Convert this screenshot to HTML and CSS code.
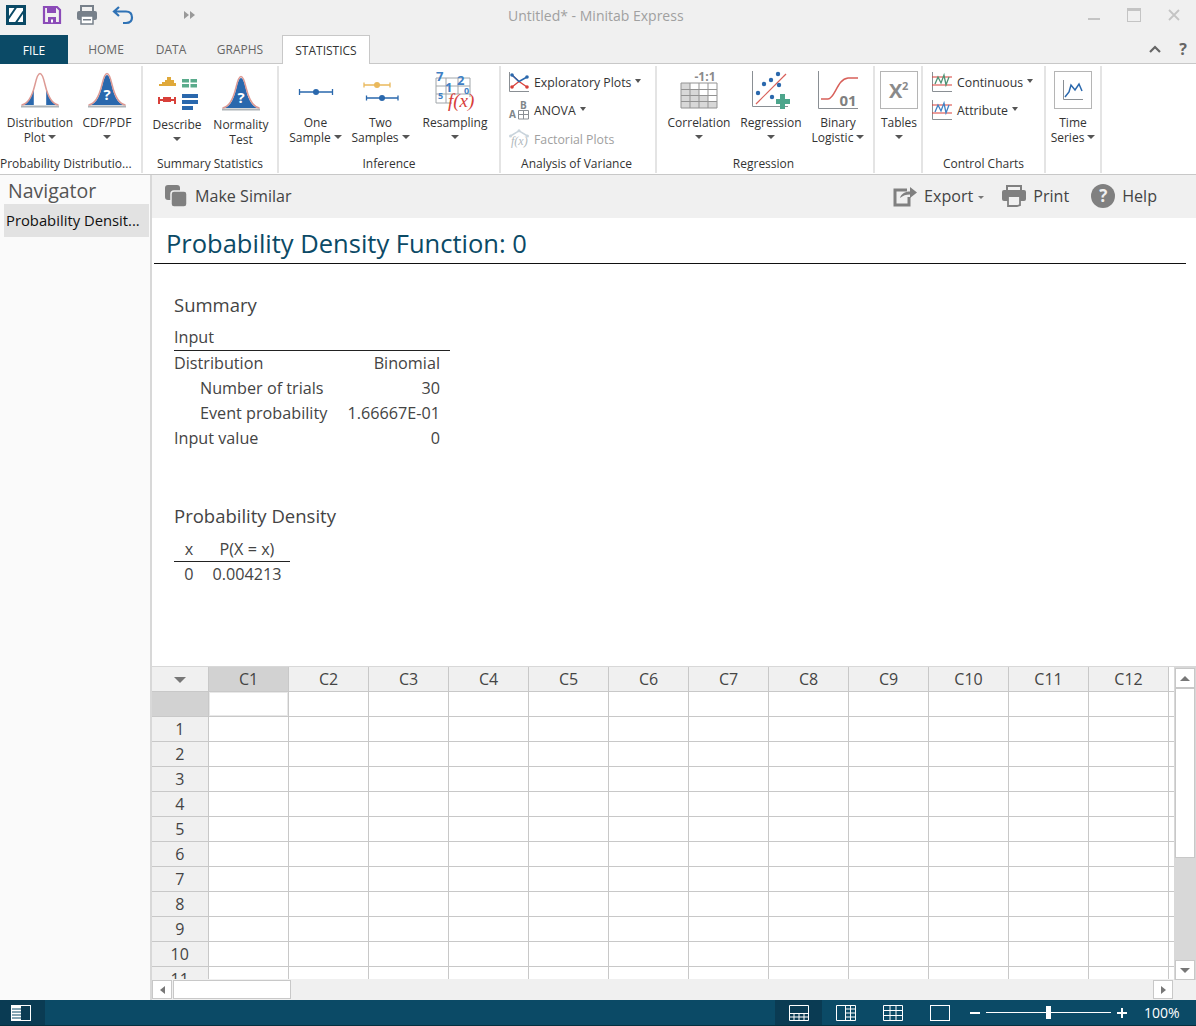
FILE: index.html
```html
<!DOCTYPE html>
<html lang="en">
<head>
<meta charset="utf-8">
<title>Untitled* - Minitab Express</title>
<link rel="stylesheet" href="styles.css">
</head>
<body>
<div class="app">
  <svg width="0" height="0" class="defs">
    <defs>
      <symbol id="bell-line" viewBox="0 0 40 36">
        <rect x="1" y="33.5" width="38" height="2" fill="#aeb4b8"/>
        <path d="M1.5 33C9 32 12.5 23 15 12.5C16.5 6 18 1.5 20 1.5C22 1.5 23.500 6 25 12.500C27.500 23 31 32 38.500 33" fill="none" stroke="#dd9a94" stroke-width="1.500"/>
      </symbol>
    </defs>
  </svg>

  <header class="titlebar">
    <div class="qat">
      <svg class="qat-logo" width="20" height="20" viewBox="0 0 20 20"><rect width="20" height="20" fill="#0b4a66"/><rect x="3" y="3" width="14" height="14" fill="#fff"/><path d="M2.500 13.500L10 2.500M10 17.500L17.500 6.500" stroke="#0b4a66" stroke-width="2"/></svg>
      <svg width="20" height="20" viewBox="0 0 20 20"><path d="M2 2H15L18 5V18H2Z" fill="none" stroke="#8b4bb8" stroke-width="2.200"/><rect x="5" y="2" width="9" height="6" fill="#8b4bb8"/><rect x="6" y="12" width="8" height="6" fill="#8b4bb8"/><rect x="9" y="14.500" width="2" height="3" fill="#fff"/></svg>
      <svg width="22" height="20" viewBox="0 0 22 20"><rect x="5" y="1" width="12" height="6" fill="none" stroke="#77808a" stroke-width="2"/><rect x="1" y="6" width="20" height="9" rx="2" fill="#77808a"/><rect x="5" y="11" width="12" height="8" fill="#fff" stroke="#77808a" stroke-width="1.500"/><rect x="7" y="14" width="8" height="1.500" fill="#77808a"/></svg>
      <svg width="22" height="20" viewBox="0 0 22 20"><path d="M7 2L2 6.500L7 11M2.500 6.500H14C18 6.500 20 9 20 12.500C20 16 18 18 14 18H11" fill="none" stroke="#2f72b5" stroke-width="2.200"/></svg>
      <span class="qat-more"><i></i><i></i></span>
    </div>
    <div class="window-title">Untitled* - Minitab Express</div>
    <div class="window-controls">
      <svg width="12" height="12" viewBox="0 0 12 12"><rect y="9" width="12" height="2" fill="#c4c4c4"/></svg>
      <svg width="14" height="14" viewBox="0 0 14 14"><rect x="0.500" y="0.500" width="13" height="13" fill="none" stroke="#c4c4c4"/><rect width="14" height="3" fill="#c4c4c4"/></svg>
      <svg width="12" height="12" viewBox="0 0 12 12"><path d="M1 1L11 11M11 1L1 11" stroke="#c4c4c4" stroke-width="1.800"/></svg>
    </div>
  </header>

  <nav class="tabs">
    <span class="tab file">FILE</span>
    <span class="tab t-home">HOME</span>
    <span class="tab t-data">DATA</span>
    <span class="tab t-graphs">GRAPHS</span>
    <span class="tab active">STATISTICS</span>
    <span class="tab-tools">
      <svg width="12" height="8" viewBox="0 0 12 8"><path d="M1 7L6 2L11 7" fill="none" stroke="#666" stroke-width="2.200"/></svg>
      <b class="help-q">?</b>
    </span>
  </nav>

  <section class="ribbon">
    <div class="group g1">
      <div class="group-body">
        <button class="rb w72">
          <span class="rb-icon"><svg width="40" height="36" viewBox="0 0 40 36"><path d="M3 33C8 31.500 11.500 26 13.800 16V33ZM37 33C32 31.500 28.500 26 26.200 16V33Z" fill="#2a68ad"/><use href="#bell-line"/></svg></span>
          <span>Distribution</span><span>Plot<i class="caret"></i></span>
        </button>
        <button class="rb w62">
          <span class="rb-icon"><svg width="40" height="36" viewBox="0 0 40 36"><path d="M3 33C10 31 13 23 15.500 12.500C17 6 18.500 3 20 3C21.500 3 23 6 24.500 12.500C27 23 30 31 37 33Z" fill="#2a68ad"/><use href="#bell-line"/><text x="20" y="28" class="q-mark">?</text></svg></span>
          <span>CDF/PDF</span><span><i class="caret solo"></i></span>
        </button>
      </div>
      <div class="group-label">Probability Distributio...</div>
    </div>

    <div class="group g2">
      <div class="group-body">
        <button class="rb w64 low">
          <span class="rb-icon">
            <svg width="42" height="36" viewBox="0 0 42 36">
              <path d="M3 11V9H6V7H9V5H11V2H15V5H18V8H20V11Z" fill="#e0a93a"/>
              <path d="M26 4H33V7.500H26ZM34.500 4H41V7.500H34.500ZM26 9H33V12.500H26ZM34.500 9H41V12.500H34.500Z" fill="#5aab8c"/>
              <path d="M3 25H19M3 22V29M19 22V29" stroke="#d8403a" stroke-width="2" fill="none"/><rect x="7" y="22" width="8" height="5" fill="#d8403a"/>
              <path d="M26 19H42V23H26ZM26 25H42V29H26ZM26 31H37V35H26Z" fill="#2a68ad"/>
            </svg>
          </span>
          <span>Describe</span><span><i class="caret solo"></i></span>
        </button>
        <button class="rb w64 low">
          <span class="rb-icon"><svg width="40" height="36" viewBox="0 0 40 36"><path d="M3 33C10 31 13 23 15.500 12.500C17 6 18.500 3 20 3C21.500 3 23 6 24.500 12.500C27 23 30 31 37 33Z" fill="#2a68ad"/><use href="#bell-line"/><text x="20" y="28" class="q-mark">?</text></svg></span>
          <span>Normality</span><span>Test</span>
        </button>
      </div>
      <div class="group-label">Summary Statistics</div>
    </div>

    <div class="group g3">
      <div class="group-body">
        <button class="rb w65">
          <span class="rb-icon"><svg width="36" height="36" viewBox="0 0 36 36"><path d="M1.500 20H34.500M1.500 17V23M34.500 17V23" stroke="#2a68ad" stroke-width="1.300" fill="none"/><circle cx="18" cy="20" r="3" fill="#2a68ad"/></svg></span>
          <span>One</span><span>Sample<i class="caret"></i></span>
        </button>
        <button class="rb w65">
          <span class="rb-icon"><svg width="36" height="36" viewBox="0 0 36 36"><path d="M1 13H27M1 10.500V15.500M27 10.500V15.500" stroke="#eab95c" stroke-width="1.300" fill="none"/><circle cx="14" cy="13" r="3" fill="#eab95c"/><path d="M3.500 26H35M3.500 23.500V28.500M35 23.500V28.500" stroke="#2a68ad" stroke-width="1.300" fill="none"/><circle cx="19" cy="26" r="3" fill="#2a68ad"/></svg></span>
          <span>Two</span><span>Samples<i class="caret"></i></span>
        </button>
        <button class="rb w84">
          <span class="rb-icon">
            <svg class="res-icon" width="40" height="40" viewBox="0 0 40 40">
              <path d="M1 8H35V27M1 8V33H17M1 16H35M1 24H35M11 8V33M23 8V24" fill="none" stroke="#a0a6aa" stroke-width="1"/>
              <text x="1" y="11" class="rs-n">7</text><text x="10" y="22" class="rs-n">1</text><text x="22" y="15" class="rs-n">2</text><text x="29" y="24" class="rs-s">0</text><text x="3" y="29" class="rs-s">5</text>
              <text x="13" y="37" class="rs-f">f(x)</text>
            </svg>
          </span>
          <span>Resampling</span><span><i class="caret solo"></i></span>
        </button>
      </div>
      <div class="group-label">Inference</div>
    </div>

    <div class="group g4">
      <div class="stack">
        <div class="sm-row h1st">
          <svg width="20" height="20" viewBox="0 0 20 20"><path d="M0.500 0V19.500H20" fill="none" stroke="#8a8f94"/><path d="M3 3L10 9.500L3 15M10 9.500L18 15" fill="none" stroke="#d8403a" stroke-width="1.300"/><path d="M3 3L10 9.500L18 5" fill="none" stroke="#2a68ad" stroke-width="1.500"/><circle cx="3" cy="15" r="1.800" fill="#d8403a"/><circle cx="18" cy="15" r="1.800" fill="#d8403a"/><circle cx="3" cy="3" r="1.800" fill="#2a68ad"/><circle cx="18" cy="5" r="1.800" fill="#2a68ad"/></svg>
          <span>Exploratory Plots<i class="caret"></i></span>
        </div>
        <div class="sm-row">
          <svg width="20" height="20" viewBox="0 0 20 20"><text x="0" y="18" class="an-t">A</text><text x="11" y="9" class="an-t">B</text><path d="M9.500 10.500H19.500V19H9.500ZM14.500 10.500V19M9.500 14.500H19.500" fill="none" stroke="#8a8f94"/></svg>
          <span>ANOVA<i class="caret"></i></span>
        </div>
        <div class="sm-row off">
          <svg width="20" height="20" viewBox="0 0 20 20"><path d="M1.500 7L10 1.800L18.500 7" fill="none" stroke="#c9d4dc" stroke-width="1.500"/><circle cx="1.500" cy="7" r="1.500" fill="#c9d4dc"/><circle cx="10" cy="1.800" r="1.500" fill="#c9d4dc"/><circle cx="18.500" cy="7" r="1.500" fill="#c9d4dc"/><text x="2" y="16" class="fx-t">f(x)</text></svg>
          <span>Factorial Plots</span>
        </div>
      </div>
      <div class="group-label">Analysis of Variance</div>
    </div>

    <div class="group g5">
      <div class="group-body">
        <button class="rb w84">
          <span class="rb-icon">
            <svg width="38" height="38" viewBox="0 0 38 38"><text x="25" y="10" class="corr-t">-1:1</text><rect x="1" y="12" width="36" height="25" fill="#fff"/><path d="M1 12H10V18H1ZM1 18H19V24H1ZM1 24H28V31H1ZM1 31H37V37H1Z" fill="#d8d8d8"/><path d="M1 12H37V37H1ZM1 18.500H37M1 24.500H37M1 30.500H37M10 12V37M19 12V37M28 12V37" fill="none" stroke="#939393" stroke-width="1"/></svg>
          </span>
          <span>Correlation</span><span><i class="caret solo"></i></span>
        </button>
        <button class="rb w60">
          <span class="rb-icon">
            <svg width="38" height="38" viewBox="0 0 38 38"><path d="M0.500 0V35.500H36" fill="none" stroke="#8a8f94"/><path d="M4 33L34 3" stroke="#d8605a" stroke-width="1.200"/><g fill="#2a68ad"><circle cx="6" cy="22" r="2.200"/><circle cx="12" cy="13" r="2.200"/><circle cx="19" cy="9" r="2.200"/><circle cx="26" cy="3" r="2.200"/><circle cx="27" cy="14" r="2.200"/><circle cx="20" cy="26" r="2.200"/></g><path d="M28 23H33V28H38V33H33V38H28V33H24V28H28Z" fill="#4da58c"/></svg>
          </span>
          <span>Regression</span><span><i class="caret solo"></i></span>
        </button>
        <button class="rb w74">
          <span class="rb-icon">
            <svg width="40" height="38" viewBox="0 0 40 38"><path d="M0.500 0V37.500H40" fill="none" stroke="#8a8f94"/><path d="M3 28H10C17 28 19 8 30 7H40" fill="none" stroke="#d8605a" stroke-width="1.500"/><text x="30" y="35" class="bin-t">01</text></svg>
          </span>
          <span>Binary</span><span>Logistic<i class="caret"></i></span>
        </button>
      </div>
      <div class="group-label">Regression</div>
    </div>

    <div class="group g6">
      <div class="group-body">
        <button class="rb w46">
          <span class="rb-icon"><span class="boxed"><svg width="36" height="36" viewBox="0 0 36 36"><text x="8" y="26" class="x2">X</text><text x="21" y="18" class="x2s">2</text></svg></span></span>
          <span>Tables</span><span><i class="caret solo"></i></span>
        </button>
      </div>
      <div class="group-label">&nbsp;</div>
    </div>

    <div class="group g7">
      <div class="stack">
        <div class="sm-row h1st">
          <svg width="20" height="20" viewBox="0 0 20 20"><path d="M0.500 0V19.500H20" fill="none" stroke="#8a8f94"/><path d="M0 5H20M0 13H20" stroke="#d8403a" stroke-width="1.200"/><path d="M3 12L6 5L9 11L12 3L14 13L17 5" fill="none" stroke="#4d9273" stroke-width="1.300"/></svg>
          <span>Continuous<i class="caret"></i></span>
        </div>
        <div class="sm-row">
          <svg width="20" height="20" viewBox="0 0 20 20"><path d="M0.500 0V19.500H20" fill="none" stroke="#8a8f94"/><path d="M0 5H20M0 13H20" stroke="#d8403a" stroke-width="1.200"/><path d="M3 12L6 5L9 11L12 3L14 13L17 5" fill="none" stroke="#3f80c4" stroke-width="1.300"/></svg>
          <span>Attribute<i class="caret"></i></span>
        </div>
      </div>
      <div class="group-label">Control Charts</div>
    </div>

    <div class="group g8">
      <div class="group-body">
        <button class="rb w54">
          <span class="rb-icon"><span class="boxed"><svg width="36" height="36" viewBox="0 0 36 36"><path d="M8.500 8V27.500H28" fill="none" stroke="#8a8f94"/><path d="M10 25L14 20L16 13L20 18L24 12L27 19" fill="none" stroke="#2a68ad" stroke-width="1.500"/></svg></span></span>
          <span>Time</span><span>Series<i class="caret"></i></span>
        </button>
      </div>
      <div class="group-label">&nbsp;</div>
    </div>
  </section>

  <div class="workspace">
    <aside class="navigator">
      <h2>Navigator</h2>
      <div class="nav-item">Probability Densit...</div>
    </aside>

    <main class="content">
      <div class="toolbar">
        <div class="tool similar">
          <svg width="24" height="24" viewBox="0 0 24 24"><rect x="1" y="1" width="15" height="15" rx="3" fill="#808080"/><rect x="7" y="7" width="16" height="16" rx="3" fill="#808080" stroke="#f0f0f0" stroke-width="1.500"/></svg>
          <span>Make Similar</span>
        </div>
        <div class="tool-right">
          <div class="tool">
            <svg width="24" height="22" viewBox="0 0 24 22"><path d="M14 5H2V20H16V12" fill="none" stroke="#808080" stroke-width="3"/><path d="M7 13C8 9 12 6.500 17 6.500V2L24 7.500L17 13V9.500C13 9.500 10 10.500 7 13Z" fill="#808080"/></svg>
            <span>Export<i class="caret dim"></i></span>
          </div>
          <div class="tool">
            <svg width="24" height="22" viewBox="0 0 24 22"><path d="M5 5V1H19V5" fill="none" stroke="#808080" stroke-width="2"/><rect y="5" width="24" height="11" rx="2" fill="#808080"/><path d="M6 11H18V20L15 21H6Z" fill="#f0f0f0" stroke="#808080" stroke-width="1.800"/></svg>
            <span>Print</span>
          </div>
          <div class="tool t-help">
            <span class="help-dot">?</span>
            <span>Help</span>
          </div>
        </div>
      </div>

      <article class="report">
        <h1>Probability Density Function: 0</h1>
        <h3 class="rep-h first">Summary</h3>
        <table class="rep-table summary">
          <thead><tr><th colspan="2">Input</th></tr></thead>
          <tbody>
            <tr><td>Distribution</td><td class="num">Binomial</td></tr>
            <tr><td class="ind">Number of trials</td><td class="num">30</td></tr>
            <tr><td class="ind">Event probability</td><td class="num">1.66667E-01</td></tr>
            <tr><td>Input value</td><td class="num">0</td></tr>
          </tbody>
        </table>
        <h3 class="rep-h second">Probability Density</h3>
        <table class="rep-table density">
          <thead><tr><th class="c-x">x</th><th class="c-p">P(X = x)</th></tr></thead>
          <tbody><tr><td class="c-x">0</td><td class="c-p">0.004213</td></tr></tbody>
        </table>
      </article>

      <div class="sheet">
        <div class="sheet-main">
          <div class="grid-clip">
            <table class="grid">
              <thead>
                <tr><th class="corner"><i class="caret big"></i></th><th class="sel">C1</th><th>C2</th><th>C3</th><th>C4</th><th>C5</th><th>C6</th><th>C7</th><th>C8</th><th>C9</th><th>C10</th><th>C11</th><th>C12</th></tr>
              </thead>
              <tbody>
                <tr><th class="sel"></th><td class="cur"></td><td></td><td></td><td></td><td></td><td></td><td></td><td></td><td></td><td></td><td></td><td></td></tr>
                <tr><th>1</th><td></td><td></td><td></td><td></td><td></td><td></td><td></td><td></td><td></td><td></td><td></td><td></td></tr>
                <tr><th>2</th><td></td><td></td><td></td><td></td><td></td><td></td><td></td><td></td><td></td><td></td><td></td><td></td></tr>
                <tr><th>3</th><td></td><td></td><td></td><td></td><td></td><td></td><td></td><td></td><td></td><td></td><td></td><td></td></tr>
                <tr><th>4</th><td></td><td></td><td></td><td></td><td></td><td></td><td></td><td></td><td></td><td></td><td></td><td></td></tr>
                <tr><th>5</th><td></td><td></td><td></td><td></td><td></td><td></td><td></td><td></td><td></td><td></td><td></td><td></td></tr>
                <tr><th>6</th><td></td><td></td><td></td><td></td><td></td><td></td><td></td><td></td><td></td><td></td><td></td><td></td></tr>
                <tr><th>7</th><td></td><td></td><td></td><td></td><td></td><td></td><td></td><td></td><td></td><td></td><td></td><td></td></tr>
                <tr><th>8</th><td></td><td></td><td></td><td></td><td></td><td></td><td></td><td></td><td></td><td></td><td></td><td></td></tr>
                <tr><th>9</th><td></td><td></td><td></td><td></td><td></td><td></td><td></td><td></td><td></td><td></td><td></td><td></td></tr>
                <tr><th>10</th><td></td><td></td><td></td><td></td><td></td><td></td><td></td><td></td><td></td><td></td><td></td><td></td></tr>
                <tr><th>11</th><td></td><td></td><td></td><td></td><td></td><td></td><td></td><td></td><td></td><td></td><td></td><td></td></tr>
              </tbody>
            </table>
          </div>
          <div class="hscroll">
            <span class="sb-btn"><i class="tri left"></i></span>
            <span class="h-thumb"></span>
            <span class="h-track"></span>
            <span class="sb-btn"><i class="tri right"></i></span>
          </div>
        </div>
        <div class="vscroll">
          <span class="sb-btn v"><i class="tri up"></i></span>
          <span class="v-thumb"></span>
          <span class="v-track"></span>
          <span class="sb-btn v"><i class="tri down"></i></span>
          <span class="v-foot"></span>
        </div>
      </div>
    </main>
  </div>

  <footer class="status">
    <span class="st-btn dark left">
      <svg width="20" height="16" viewBox="0 0 20 16"><rect x="0.500" y="0.500" width="19" height="15" fill="none" stroke="#fff"/><rect x="1" y="1" width="9" height="14" fill="#fff"/><path d="M1 4H10M1 7H10M1 10H10M1 13H10" stroke="#0b4a66"/></svg>
    </span>
    <span class="st-views">
      <span class="st-btn dark">
        <svg width="20" height="16" viewBox="0 0 20 16"><path d="M0.500 0.500H19.500V15.500H0.500ZM0.500 8.500H19.500M0.500 12H19.500M5 8.500V15.500M10 8.500V15.500M15 8.500V15.500" fill="none" stroke="#fff"/></svg>
      </span>
      <span class="st-btn">
        <svg width="20" height="16" viewBox="0 0 20 16"><path d="M0.500 0.500H19.500V15.500H0.500ZM9.500 0.500V15.500M14.500 0.500V15.500M9.500 4H19.500M9.500 8H19.500M9.500 12H19.500" fill="none" stroke="#fff"/></svg>
      </span>
      <span class="st-btn">
        <svg width="20" height="16" viewBox="0 0 20 16"><path d="M0.500 0.500H19.500V15.500H0.500ZM0.500 5.500H19.500M0.500 10.500H19.500M7 0.500V15.500M13 0.500V15.500" fill="none" stroke="#fff"/></svg>
      </span>
      <span class="st-btn">
        <svg width="20" height="16" viewBox="0 0 20 16"><rect x="0.500" y="0.500" width="19" height="15" fill="none" stroke="#fff"/></svg>
      </span>
    </span>
    <span class="zoom">
      <i class="z-minus"></i>
      <span class="z-track"><i class="z-thumb"></i></span>
      <i class="z-plus"></i>
      <span class="z-val">100%</span>
    </span>
  </footer>
</div>
</body>
</html>
```

FILE: styles.css
```css
* { box-sizing: border-box; }
html, body { margin: 0; padding: 0; }
body { font-family: "Open Sans", "Noto Sans", sans-serif; color: #333; background: #fff; }
.defs { position: absolute; }
.app { width: 1196px; height: 1026px; display: flex; flex-direction: column; overflow: hidden; }

/* title bar */
.titlebar { height: 35px; background: #f0f0f0; display: flex; align-items: center; flex: none; }
.qat { width: 508px; display: flex; align-items: center; gap: 14px; padding: 0 0 5px 6px; }
.qat-logo { margin-right: 2px; }
.qat-more { display: flex; margin-left: 36px; gap: 1px; }
.qat-more i { border-left: 5px solid #999; border-top: 4px solid transparent; border-bottom: 4px solid transparent; }
.window-title { font-size: 14px; color: #a0a0a0; width: 580px; padding-bottom: 5px; }
.window-controls { display: flex; align-items: center; gap: 27px; padding-bottom: 5px; }

/* tabs */
.tabs { height: 29px; background: #f0f0f0; border-bottom: 1px solid #c8c8c8; display: flex; flex: none; font-size: 12px; color: #666; position: relative; }
.tab { display: flex; align-items: center; justify-content: center; height: 29px; }
.file { width: 68px; background: #0b4a66; color: #fff; padding-top: 2px; }
.t-home { width: 76px; }
.t-data { width: 54px; }
.t-graphs { width: 84px; }
.active { width: 88px; background: #fff; color: #333; border: 1px solid #c8c8c8; border-bottom: 0; height: 29px; }
.tab-tools { margin-left: auto; display: flex; align-items: center; gap: 18px; padding-right: 9px; }
.help-q { font-size: 16px; color: #666; }

/* ribbon */
.ribbon { height: 111px; background: #fff; border-bottom: 1px solid #c8c8c8; display: flex; flex: none; }
.ribbon svg { overflow: visible; }
.group { display: flex; flex-direction: column; flex: none; border-right: 2px solid #e4e4e4; margin: 2px 0 1px; }
.g1 { width: 143px; } .g2 { width: 136px; } .g3 { width: 222px; } .g4 { width: 156px; }
.g5 { width: 218px; } .g6 { width: 48px; } .g7 { width: 123px; } .g8 { width: 56px; }
.group-body { flex: 1; min-height: 0; display: flex; padding-left: 4px; }
.g2 .group-body { padding-left: 2px; }
.g5 .group-body { padding-left: 0; }
.g6 .group-body { padding-left: 1px; }
.g8 .group-body { padding-left: 0; }
.group-label { height: 22px; font-size: 12px; line-height: 26px; text-align: center; white-space: nowrap; color: #333; flex: none; }
.g1 .group-label { text-align: left; }
.g4 .group-label { padding-right: 3px; }
.g5 .group-label { padding-right: 3px; }

.rb { border: 0; background: none; padding: 0; margin: 0; font: inherit; font-size: 12px; line-height: 15px; color: #333; display: flex; flex-direction: column; align-items: center; flex: none; white-space: nowrap; }
.rb > span:nth-child(2), .rb > span:nth-child(3) { height: 15px; }
.rb-icon { height: 49px; display: flex; align-items: center; justify-content: center; padding-bottom: 2px; flex: none; }
.low .rb-icon { height: 51px; padding-bottom: 0; padding-top: 2px; }
.w46 { width: 46px; } .w54 { width: 54px; } .w60 { width: 60px; } .w62 { width: 62px; } .w64 { width: 64px; } .w65 { width: 65px; } .w72 { width: 72px; } .w74 { width: 74px; } .w84 { width: 84px; }
.boxed { width: 38px; height: 38px; border: 1px solid #b5b5b5; display: block; }
.boxed svg { display: block; }

.caret { display: inline-block; vertical-align: middle; margin-left: 3px; border-top: 4px solid #555; border-left: 4px solid transparent; border-right: 4px solid transparent; }
.rb .caret { margin-top: -3px; }
.caret.solo { margin-left: 0; }
.caret.dim { border-top-color: #777; margin-left: 5px; border-left-width: 3px; border-right-width: 3px; border-top-width: 3px; }
.caret.big { margin: 0; border-top-width: 6px; border-left-width: 6px; border-right-width: 6px; border-top-color: #777; }

.stack { flex: 1; min-height: 0; display: flex; flex-direction: column; padding-left: 8px; }
.g7 .stack { padding-left: 9px; }
.sm-row { display: flex; align-items: center; gap: 5px; height: 28px; font-size: 12.300px; white-space: nowrap; flex: none; }
.sm-row.h1st { margin-top: 2px; }
.sm-row .caret { margin-left: 4px; margin-top: -5px; border-left-width: 3.500px; border-right-width: 3.500px; }
.off { color: #a0a0a0; padding-top: 2px; }

.q-mark { font: bold 15px "Open Sans", sans-serif; fill: #fff; text-anchor: middle; }
.rs-n { font: bold 13px "Open Sans", sans-serif; fill: #3f80c4; }
.rs-s { font: bold 9px "Open Sans", sans-serif; fill: #3f80c4; }
.rs-f { font: italic 19px "Liberation Serif", serif; fill: #d8403a; }
.an-t { font: bold 10px "Open Sans", sans-serif; fill: #80868a; }
.fx-t { font: italic 12px "Liberation Serif", serif; fill: #b0b8bc; }
.corr-t { font: bold 12px "Open Sans", sans-serif; fill: #8a8a8a; text-anchor: middle; }
.bin-t { font: bold 15px "Open Sans", sans-serif; fill: #808080; text-anchor: middle; }
.x2 { font: bold 20px "Open Sans", sans-serif; fill: #8a8a8a; }
.x2s { font: bold 11px "Open Sans", sans-serif; fill: #8a8a8a; }

/* workspace */
.workspace { flex: 1; display: flex; min-height: 0; }
.navigator { width: 152px; flex: none; background: #fafafa; border-right: 2px solid #d8d8d8; padding: 4px 0 0 4px; }
.navigator h2 { margin: 0 0 1px 4px; font-size: 19.500px; font-weight: 400; line-height: 24px; color: #555; }
.nav-item { width: 145px; height: 33px; background: #e2e2e2; font-size: 14.800px; line-height: 32px; padding-left: 2px; color: #111; white-space: nowrap; overflow: hidden; }

.content { flex: 1; min-width: 0; display: flex; flex-direction: column; background: #fff; }
.toolbar { height: 43px; background: #f0f0f0; display: flex; align-items: center; flex: none; padding: 0 39px 2px 12px; font-size: 16.100px; color: #444; }
.tool { display: flex; align-items: center; gap: 7px; white-space: nowrap; }
.tool-right { margin-left: auto; display: flex; gap: 18px; }
.t-help { margin-left: 4px; }
.help-dot { width: 24px; height: 24px; border-radius: 50%; background: #808080; color: #f0f0f0; font-weight: 700; font-size: 17px; line-height: 24px; text-align: center; }

.report { flex: 1; padding: 0 10px 0 2px; min-height: 0; }
.report h1 { margin: 0; height: 46px; border-bottom: 1px solid #111; font-size: 25.500px; font-weight: 400; line-height: 50px; padding-left: 12px; color: #0b4a66; white-space: nowrap; }
.rep-h { margin: 0 0 0 20px; font-size: 18.500px; font-weight: 400; color: #444; line-height: 24px; }
.rep-h.first { padding-top: 29px; height: 53px; box-sizing: border-box; }
.rep-h.second { margin-top: 54px; }
.rep-table { border-collapse: collapse; margin-left: 20px; font-size: 16.200px; color: #444; }
.rep-table th { font-weight: 400; border-bottom: 1px solid #222; text-align: left; height: 25px; padding: 0; }
.rep-table td { height: 25px; padding: 0; white-space: nowrap; }
.summary { width: 276px; margin-top: 8px; }
.summary .num { text-align: right; padding-right: 10px; }
.summary .ind { padding-left: 26px; }
.density { width: 116px; margin-top: 9px; }
.density th { height: 24px; }
.density .c-x { text-align: center; width: 30px; }
.density .c-p { text-align: center; }

/* worksheet */
.sheet { height: 334px; display: flex; flex: none; background: #f0f0f0; border-top: 1px solid #d8d8d8; }
.sheet-main { flex: 1; min-width: 0; display: flex; flex-direction: column; }
.grid-clip { height: 312px; overflow: hidden; background: repeating-linear-gradient(to bottom, transparent 0 24px, #c8c8c8 24px 25px) #fff; flex: none; }
.grid { border-collapse: collapse; table-layout: fixed; width: 1016px; font-size: 16px; color: #444; }
.grid th { font-weight: 400; background: #f0f0f0; border: 1px solid #c8c8c8; width: 80px; height: 25px; padding: 0; }
.grid td { border: 1px solid #c8c8c8; width: 80px; height: 25px; padding: 0; }
.grid th.corner { width: 56px; }
.grid thead th { border-top: 0; height: 24px; padding-left: 1px; }
.grid tr > :first-child { border-left: 0; }
.grid th.sel { background: #d2d2d2; }
.grid td.cur { box-shadow: inset 0 0 0 1px #e8e8e8; }

.hscroll { height: 21px; display: flex; align-items: center; gap: 1px; background: #f0f0f0; padding-right: 1px; }
.sb-btn { width: 20px; height: 19px; background: #fff; border: 1px solid #c8c8c8; display: flex; align-items: center; justify-content: center; flex: none; }
.h-thumb { width: 118px; height: 19px; background: #fff; border: 1px solid #c8c8c8; flex: none; }
.h-track { flex: 1; }
.tri { display: block; }
.tri.left { border-right: 5px solid #777; border-top: 4px solid transparent; border-bottom: 4px solid transparent; }
.tri.right { border-left: 5px solid #777; border-top: 4px solid transparent; border-bottom: 4px solid transparent; }
.tri.up { border-bottom: 5px solid #777; border-left: 5px solid transparent; border-right: 5px solid transparent; }
.tri.down { border-top: 5px solid #777; border-left: 5px solid transparent; border-right: 5px solid transparent; }
.vscroll { width: 22px; flex: none; display: flex; flex-direction: column; background: #d8d8d8; padding-top: 1px; }
.sb-btn.v { height: 20px; width: 20px; margin-left: 1px; }
.v-thumb { width: 20px; height: 170px; background: #fff; border: 1px solid #c8c8c8; margin: 0 0 0 1px; flex: none; }
.v-track { flex: 1; }
.v-foot { height: 20px; width: 22px; background: #f0f0f0; flex: none; }

/* status bar */
.status { height: 26px; flex: none; background: #0b4a66; border-bottom: 1px solid #06303f; display: flex; align-items: stretch; color: #fff; }
.st-btn { width: 47px; display: flex; align-items: center; justify-content: center; }
.st-btn.left { width: 45px; padding-right: 3px; }
.dark { background: #0a3b53; }
.st-views { margin-left: 730px; display: flex; }
.zoom { display: flex; align-items: center; margin-left: 7px; }
.z-minus { width: 10px; height: 2px; background: #fff; margin-left: 0; }
.z-track { width: 125px; height: 1px; background: #fff; margin-left: 6px; display: block; position: relative; }
.z-thumb { position: absolute; left: 60px; top: -6px; width: 5px; height: 13px; background: #fff; }
.z-plus { width: 10px; height: 10px; margin-left: 6px; background: linear-gradient(#fff, #fff) center/10px 2px no-repeat, linear-gradient(#fff, #fff) center/2px 10px no-repeat; }
.z-val { font-size: 14px; margin-left: 17px; }
```
